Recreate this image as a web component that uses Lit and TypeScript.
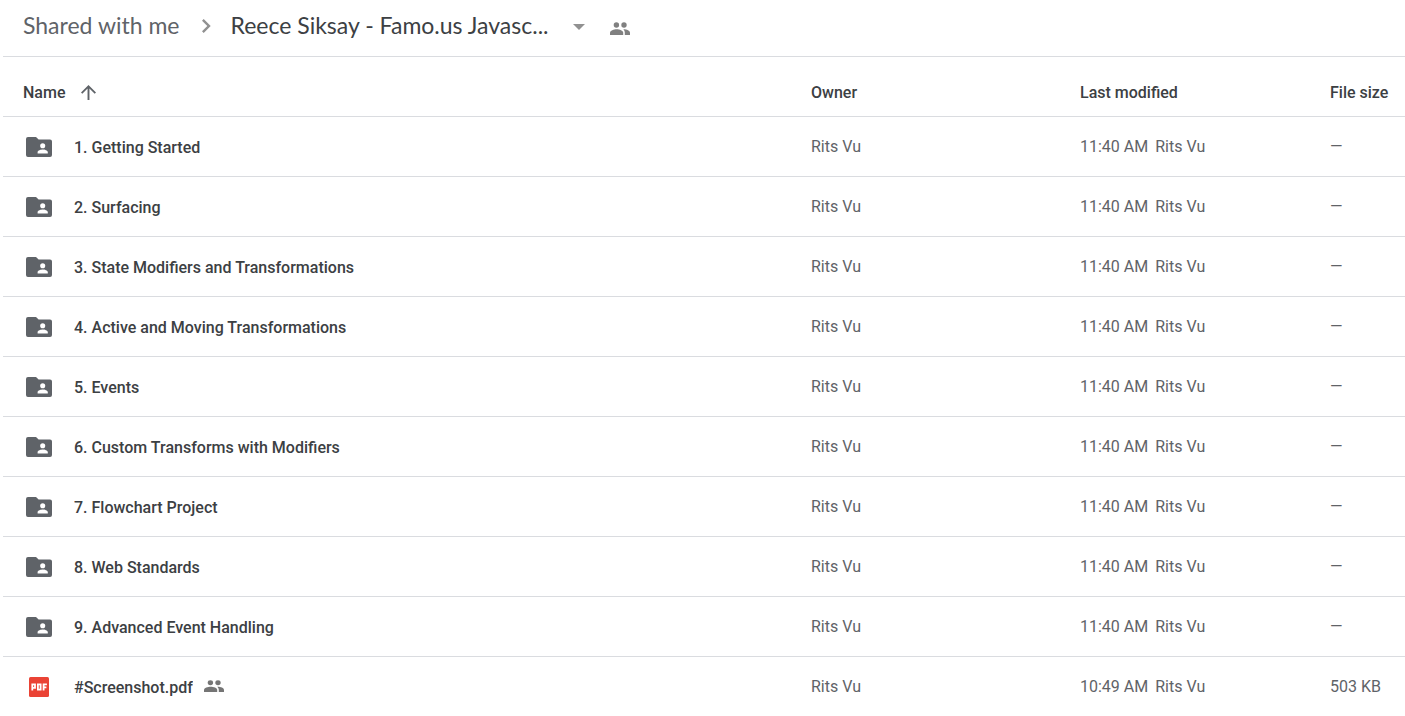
import { LitElement, html, css, svg } from "lit";
import { customElement, state } from "lit/decorators.js";

interface Entry {
  name: string;
  kind: "folder" | "pdf";
  owner: string;
  time: string;
  by: string;
  size: string;
  shared?: boolean;
}

const folder = (name: string): Entry => ({
  name,
  kind: "folder",
  owner: "Rits Vu",
  time: "11:40 AM",
  by: "Rits Vu",
  size: "—",
});

const people = svg`
  <circle cx="6.4" cy="3" r="2.7"/>
  <circle cx="14" cy="3" r="2.7"/>
  <path d="M0 13v-2.2C0 8.400 3.900 7.200 6.700 7.200s6.500 1.200 6.500 3.600V13z"/>
  <path d="M13.300 7.250c3.200-.1 6.700 1.100 6.700 3.550V13h-5.200v-2.200c0-1.600-.6-2.700-1.500-3.550z"/>`;

@customElement("app-root")
export class AppRoot extends LitElement {
  @state() private ascending = true;

  private entries: Entry[] = [
    folder("1. Getting Started"),
    folder("2. Surfacing"),
    folder("3. State Modifiers and Transformations"),
    folder("4. Active and Moving Transformations"),
    folder("5. Events"),
    folder("6. Custom Transforms with Modifiers"),
    folder("7. Flowchart Project"),
    folder("8. Web Standards"),
    folder("9. Advanced Event Handling"),
    {
      name: "#Screenshot.pdf",
      kind: "pdf",
      owner: "Rits Vu",
      time: "10:49 AM",
      by: "Rits Vu",
      size: "503 KB",
      shared: true,
    },
  ];

  static styles = css`
    :host {
      display: block;
      min-height: 100vh;
      overflow: hidden;
      box-sizing: border-box;
      padding-left: 3px;
      background: #fff;
      color: #3c4043;
      font: 16px/20px Roboto, "Liberation Sans", sans-serif;
    }
    svg {
      display: block;
      flex: none;
      fill: currentColor;
    }
    button {
      display: flex;
      align-items: center;
      margin: 0;
      padding: 0;
      border: 0;
      background: none;
      color: inherit;
      font: inherit;
      cursor: pointer;
    }
    .crumbs {
      display: flex;
      align-items: center;
      height: 50px;
      padding: 0 20px 6px;
      border-bottom: 1px solid #dadce0;
      font-family: Lato, Roboto, sans-serif;
      font-size: 23px;
      line-height: 28px;
      white-space: nowrap;
    }
    .parent {
      color: #5f6368;
      text-decoration: none;
    }
    .chevron {
      margin: 2px 19px 0 22px;
      color: #919191;
    }
    .current {
      gap: 24px;
    }
    .caret {
      margin-top: 4px;
      color: #919191;
    }
    .members {
      margin: 6px 0 0 25px;
      color: #808080;
    }
    table {
      width: 100%;
      table-layout: fixed;
      border-collapse: separate;
      border-spacing: 0;
    }
    th,
    td {
      box-sizing: border-box;
      height: 60px;
      padding: 0;
      text-align: left;
      vertical-align: middle;
      white-space: nowrap;
      border-bottom: 1px solid #dadce0;
    }
    th {
      padding-top: 12px;
      font-weight: 500;
    }
    td {
      color: #5f6368;
    }
    tr:last-child td {
      border-bottom-color: transparent;
    }
    thead tr:last-child th {
      border-bottom-color: #dadce0;
    }
    th:first-child,
    td:first-child {
      padding-left: 20px;
    }
    .owner {
      width: 269px;
    }
    .modified {
      width: 250px;
    }
    .size {
      width: 75px;
    }
    .sort {
      gap: 16px;
    }
    .sort svg {
      color: #5f6368;
    }
    .sort.desc svg {
      transform: rotate(180deg);
    }
    .file {
      display: flex;
      align-items: center;
      padding-top: 2px;
    }
    .icon {
      display: flex;
      justify-content: center;
      width: 32px;
      padding-bottom: 2px;
      margin-right: 19px;
      color: #5f6368;
    }
    .label {
      color: #3c4043;
      font-weight: 500;
      overflow: hidden;
      text-overflow: ellipsis;
    }
    .shared {
      margin: 0 0 4px 11px;
      color: #757575;
    }
    .by {
      margin-left: 7px;
    }
  `;

  private toggle() {
    this.ascending = !this.ascending;
  }

  private folderIcon() {
    return html`<svg width="26" height="20" viewBox="0 0 26 20" aria-hidden="true">
      <path
        fill-rule="evenodd"
        d="M2 0H10l2.600 2.500h11.400A2 2 0 0 1 26 4.500v13.500a2 2 0 0 1-2 2h-22A2 2 0 0 1 0 18v-16A2 2 0 0 1 2 0zM16.700 6.200a2.550 2.550 0 1 0 0 5.100 2.550 2.550 0 0 0 0-5.100zM11.600 16.400h10.200v-1.300c0-1.700-3.400-2.600-5.100-2.600s-5.100.9-5.100 2.600z"
      />
    </svg>`;
  }

  private pdfIcon() {
    return html`<svg width="20" height="20" viewBox="0 0 20 20" aria-label="PDF" role="img">
      <rect width="20" height="20" rx="1.500" fill="#ea4335" />
      <g fill="none" stroke="#fff" stroke-width="1.800">
        <path d="M3.300 13.500V7.300h2.700v3.500H3.300" />
        <path d="M8.900 7.300h2.700v5.300H8.900z" />
        <path d="M14.600 13.500V7.300h3.300M14.600 10.300h2.800" />
      </g>
    </svg>`;
  }

  private row(e: Entry) {
    return html`<tr>
      <td>
        <div class="file">
          <span class="icon">${e.kind === "folder" ? this.folderIcon() : this.pdfIcon()}</span>
          <span class="label">${e.name}</span>
          ${e.shared
            ? html`<svg class="shared" width="20" height="12" viewBox="0 0 20 13" preserveAspectRatio="none" role="img" aria-label="Shared">${people}</svg>`
            : ""}
        </div>
      </td>
      <td>${e.owner}</td>
      <td>${e.time}<span class="by">${e.by}</span></td>
      <td>${e.size}</td>
    </tr>`;
  }

  render() {
    const rows = this.ascending ? this.entries : [...this.entries].reverse();
    return html`
      <nav class="crumbs" aria-label="Location">
        <a class="parent" href="#shared">Shared with me</a>
        <svg class="chevron" width="10" height="14" viewBox="0 0 10 14" aria-hidden="true">
          <path d="M1.700 0 0 1.700 5.300 7 0 12.300 1.700 14l7-7z" />
        </svg>
        <button class="current" aria-haspopup="menu">
          Reece Siksay - Famo.us Javasc...
          <svg class="caret" width="12" height="6" viewBox="0 0 12 6" aria-hidden="true">
            <path d="M0 0h12L6 6z" />
          </svg>
        </button>
        <button class="members" aria-label="Manage members">
          <svg width="20" height="13" viewBox="0 0 20 13" aria-hidden="true">${people}</svg>
        </button>
      </nav>
      <table>
        <thead>
          <tr>
            <th aria-sort=${this.ascending ? "ascending" : "descending"}>
              <button class="sort ${this.ascending ? "" : "desc"}" @click=${this.toggle}>
                Name
                <svg width="15" height="15" viewBox="0 0 15 15" aria-hidden="true">
                  <path d="M7.500 0 0 7.500l1.300 1.300 5.250-5.250V15h1.900V3.550l5.250 5.250L15 7.500z" />
                </svg>
              </button>
            </th>
            <th class="owner">Owner</th>
            <th class="modified">Last modified</th>
            <th class="size">File size</th>
          </tr>
        </thead>
        <tbody>
          ${rows.map((e) => this.row(e))}
        </tbody>
      </table>
    `;
  }
}
